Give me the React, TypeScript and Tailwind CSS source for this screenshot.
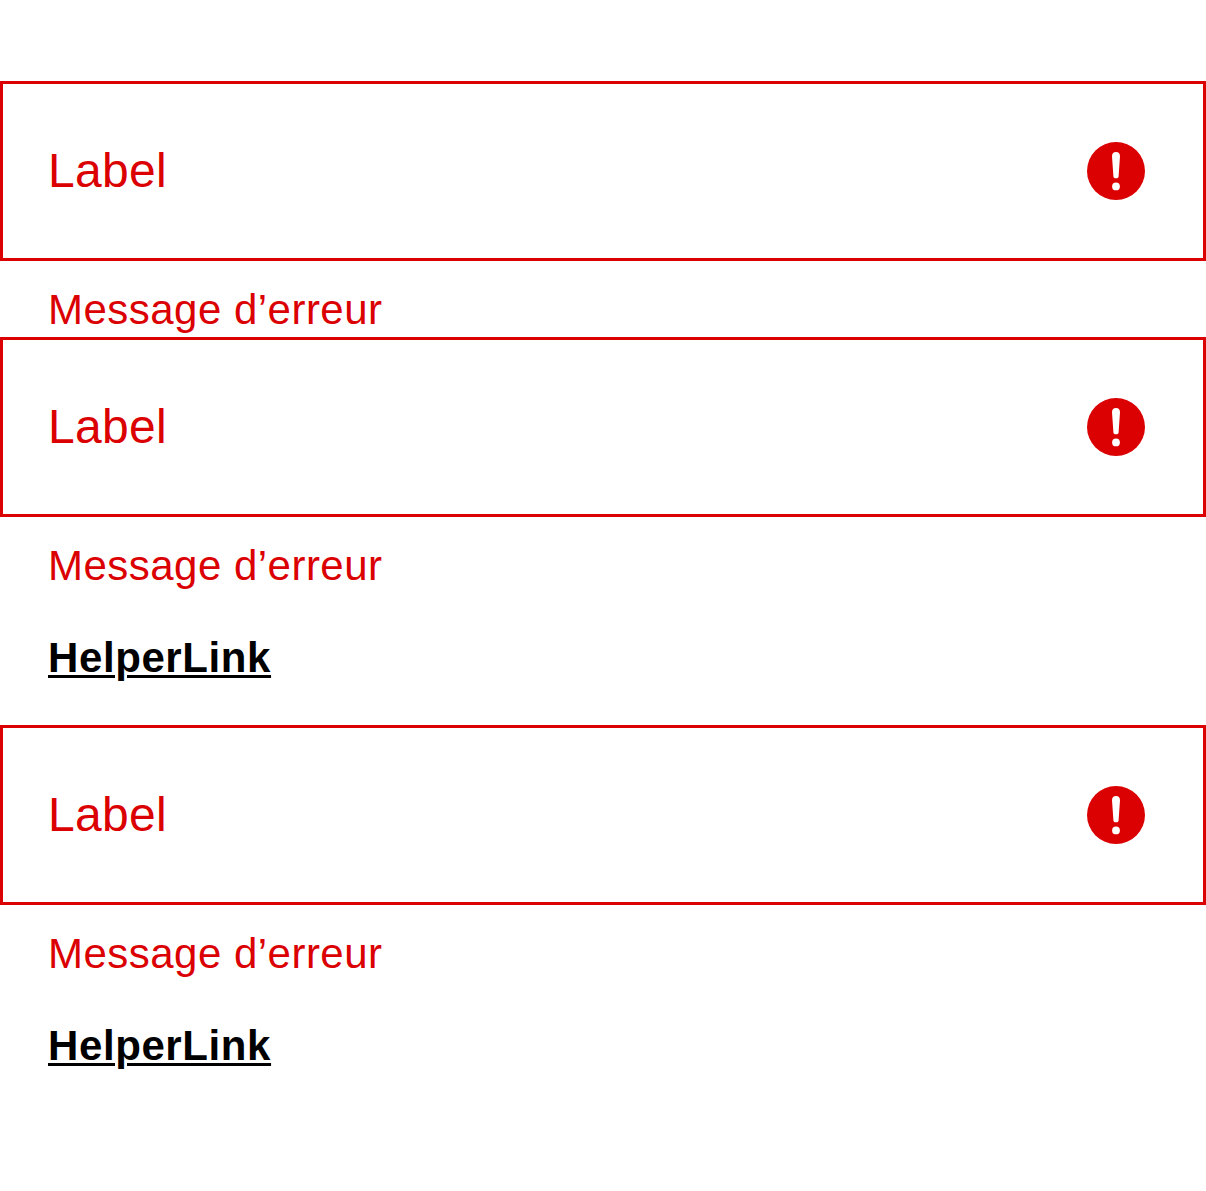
function ErrorIcon() {
  return (
    <svg className="size-[58px]" viewBox="0 0 58 58" aria-hidden="true">
      <circle cx="29" cy="29" r="29" fill="#db0002" />
      <path d="M25 14.2 C24.9 11.5 26.6 10 29 10 C31.4 10 33.1 11.5 33 14.2 L31.6 34.2 C31.5 35.7 30.9 36.2 29 36.2 C27.1 36.2 26.5 35.7 26.4 34.2 Z" fill="#fff" />
      <circle cx="29" cy="44.4" r="3.9" fill="#fff" />
    </svg>
  );
}

function Field({ link }: { link?: boolean }) {
  return (
    <section>
      <div className="flex h-[180px] items-center justify-between border-[3px] border-[#db0002] pl-[45px] pr-[58px]">
        <span className="text-[48px] leading-[60px] tracking-[0.3px] text-[#db0002]">Label</span>
        <ErrorIcon />
      </div>
      <p className="pt-[23px] pb-px pl-12 text-[42px] leading-[52px] tracking-[0.48px] text-[#db0002]">Message d’erreur</p>
      {link && (
        <div className="h-[132px] pt-[39px] pl-12">
          <a className="block w-fit text-[42px] leading-[52px] font-bold tracking-[0.6px] text-black underline decoration-[3px] underline-offset-[3px]">HelperLink</a>
        </div>
      )}
    </section>
  );
}

export default function App() {
  return (
    <main className="h-[1191px] overflow-hidden bg-white pt-[81px] font-['Liberation_Sans',sans-serif]">
      <Field />
      <Field link />
      <Field link />
    </main>
  );
}
